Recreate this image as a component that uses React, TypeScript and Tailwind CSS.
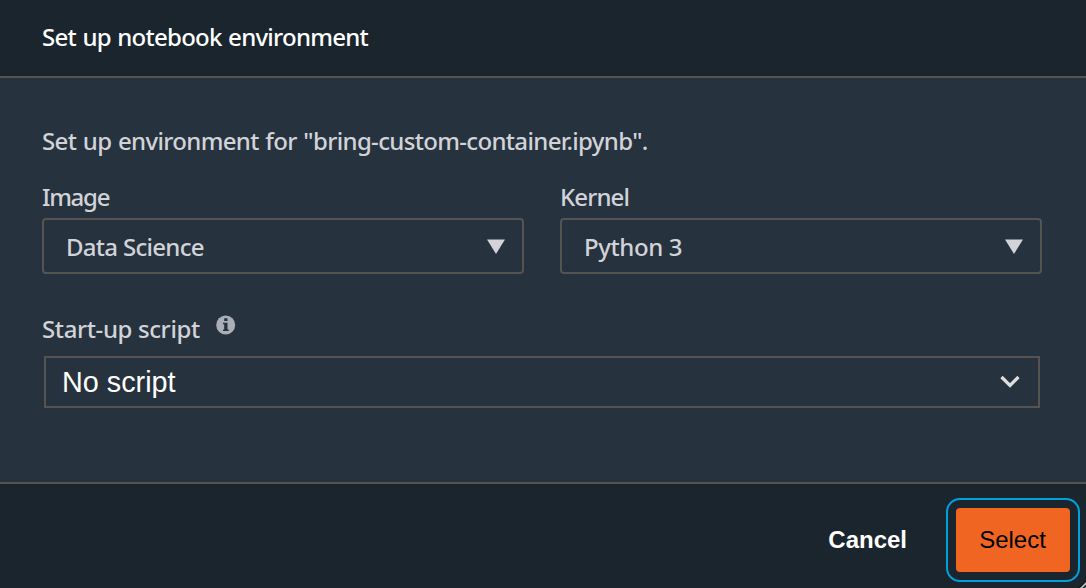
import React from "react";

const ember = "font-['Noto_Sans','Open_Sans',sans-serif] font-medium";

interface FieldProps {
  label: string;
  value: string;
  labelTracking: string;
  valueTracking: string;
}

function Field({ label, value, labelTracking, valueTracking }: FieldProps) {
  return (
    <div className="flex w-[482px] flex-col">
      <label className={`h-[39px] text-[24px] leading-[36px] ${labelTracking}`}>{label}</label>
      <button
        type="button"
        className={`flex h-14 items-center justify-between rounded-[4px] border-2 border-[#565453] pt-px pr-[17px] pl-[22px] text-[24px] ${valueTracking}`}
      >
        <span>{value}</span>
        <svg className="mt-px" width="18" height="16" viewBox="0 0 18 16" fill="#d1d3d9">
          <path d="M0 .6h18L9 15z" />
        </svg>
      </button>
    </div>
  );
}

export default function App() {
  return (
    <div className={`relative flex h-[588px] w-[1086px] flex-col overflow-hidden bg-[#26323d] text-[#d1d3d9] ${ember}`}>
      <header className="flex h-[78px] items-center border-b-2 border-[#565453] bg-[#1b252d] pb-[2px] pl-[42px] text-white">
        <h1 className="text-[24px] leading-[36px] tracking-[-0.75px] [word-spacing:1px]">Set up notebook environment</h1>
      </header>

      <main className="flex flex-1 flex-col px-[42px] pt-[45px]">
        <p className="h-[56px] text-[24px] leading-[36px] tracking-[-0.66px] [word-spacing:1px]">
          Set up environment for "bring-custom-container.ipynb".
        </p>
        <div className="flex gap-9">
          <Field label="Image" value="Data Science" labelTracking="tracking-[-1.3px]" valueTracking="tracking-[-0.7px]" />
          <Field label="Kernel" value="Python 3" labelTracking="tracking-[-0.9px]" valueTracking="tracking-[-0.4px]" />
        </div>
        <div className="mt-[37px] flex h-[45px] items-start">
          <label className="w-[174px] text-[24px] leading-[36px] tracking-[-0.38px]">Start-up script</label>
          <svg className="mt-1" width="20" height="20" viewBox="0 0 20 20">
            <circle cx="9.700" cy="10" r="9.500" fill="#a9aeb7" />
            <path d="M8.200 3.300h3.300v2.700H8.200zM7 7.700h4.500v6.800h1.200V16H7v-1.500h1.200V9.200H7z" fill="#26323d" />
          </svg>
        </div>
        <button
          type="button"
          className="mr-1 ml-[2px] flex h-[52px] items-center justify-between border-2 border-[#565453] pr-[18px] pl-4 font-['Liberation_Sans',Arial,sans-serif] text-[28.8px] font-normal text-white"
        >
          <span className="pt-[2px]">No script</span>
          <svg width="20" height="14" viewBox="0 0 20 14" fill="none" stroke="#dedede" strokeWidth="3.200">
            <path d="M1.500 2l8.500 8.500L18.500 2" />
          </svg>
        </button>
      </main>

      <footer className="flex h-[106px] items-center justify-end border-t-2 border-[#565453] bg-[#1b252d] pt-2 pr-[6px] font-['Liberation_Sans',Arial,sans-serif] text-[24px]">
        <button type="button" className="mr-[39px] font-bold text-white">
          Cancel
        </button>
        <div className="rounded-[14px] border-2 border-[#00a1dd] p-2">
          <button type="button" className="h-16 w-[114px] rounded-[4px] bg-[#f06522] pr-px font-normal text-black">
            Select
          </button>
        </div>
      </footer>

      <svg className="absolute right-0 bottom-0" width="8" height="8" viewBox="0 0 8 8">
        <path d="M0 8L8 0v8z" fill="#11171c" />
        <path d="M2 8L8 2v2.500L4.500 8z" fill="#b9bcbf" />
        <path d="M6.300 8L8 6.300V8z" fill="#8b8f93" />
      </svg>
    </div>
  );
}
